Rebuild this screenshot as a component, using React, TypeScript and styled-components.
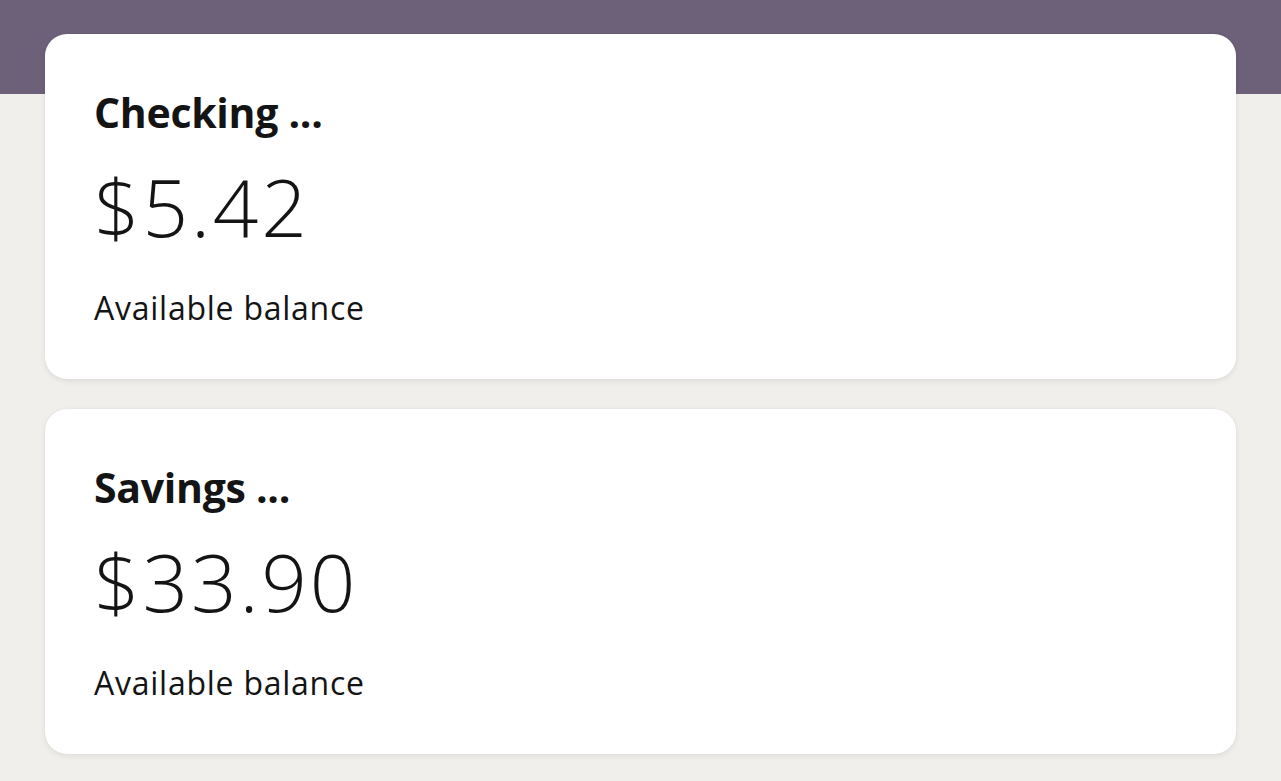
import React from "react";
import styled, { createGlobalStyle } from "styled-components";

interface accountProps {
  name: string;
  amount: string;
}

const AccountCard: React.FC<accountProps> = ({ name, amount }) => {
  return (
    <CardDiv>
      <div className="accName">{name} ...</div>
      <div className="accAmount">{amount}</div>
      <div className="accLabel">Available balance</div>
    </CardDiv>
  );
};

const App: React.FC = () => {
  return (
    <>
      <GlobalStyle />
      <Page>
        <TopBand />
        <CardList>
          <AccountCard name="Checking" amount="$5.42" />
          <AccountCard name="Savings" amount="$33.90" />
        </CardList>
      </Page>
    </>
  );
};

export default App;

const GlobalStyle = createGlobalStyle`
  html, body {
    margin: 0;
    padding: 0;
    background: #f1efec;
    font-family: "Open Sans", "Noto Sans", sans-serif;
    color: #141414;
  }
`;

const Page = styled.div`
  position: relative;
  width: 1281px;
  height: 781px;
  overflow: hidden;
  background: #f1efec;
`;

const TopBand = styled.div`
  height: 94px;
  background: #6c6179;
`;

const CardList = styled.div`
  margin-top: -60px;
  padding: 0 45px;
  display: flex;
  flex-direction: column;
  gap: 30px;
`;

const CardDiv = styled.div`
  box-sizing: border-box;
  height: 345px;
  background: #ffffff;
  border-radius: 22px;
  box-shadow: 0 2px 6px rgba(0, 0, 0, 0.08), 0 0 2px rgba(0, 0, 0, 0.05);
  padding: 50px 49px 0;
  display: flex;
  flex-direction: column;
  .accName {
    font-size: 41px;
    font-weight: 700;
    line-height: 56px;
    letter-spacing: -0.3px;
  }
  .accAmount {
    margin-top: 18px;
    font-size: 80px;
    font-weight: 300;
    line-height: 96px;
    letter-spacing: 2.8px;
  }
  .accLabel {
    margin-top: 34px;
    font-size: 32px;
    font-weight: 400;
    line-height: 40px;
    letter-spacing: 0.75px;
  }
`;
